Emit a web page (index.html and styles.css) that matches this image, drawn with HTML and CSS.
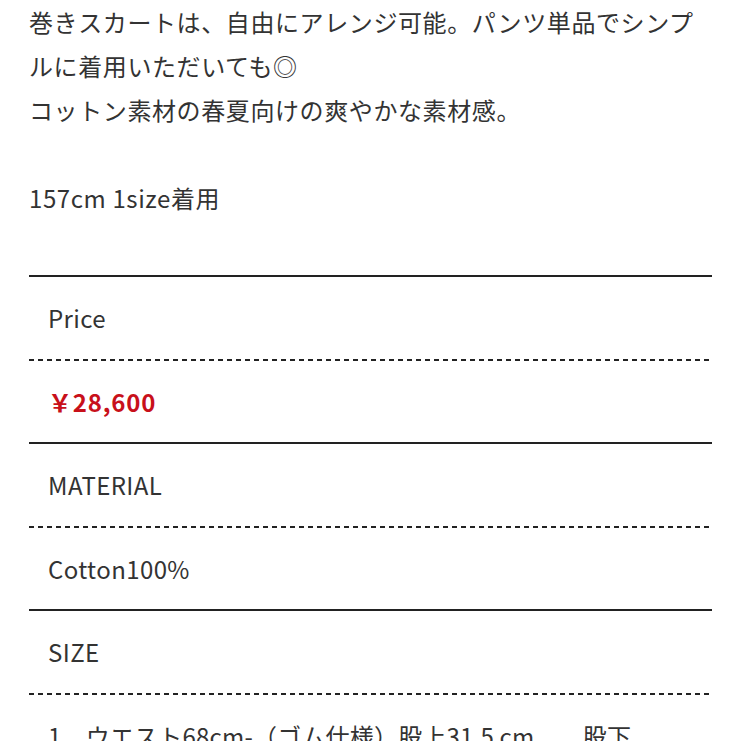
FILE: index.html
```html
<!DOCTYPE html>
<html lang="ja">
<head>
<meta charset="utf-8">
<title>巻きスカート</title>
<link rel="stylesheet" href="styles.css">
</head>
<body>
<main class="page">
  <p class="desc">巻きスカートは、自由にアレンジ可能。パンツ単品でシンプ<br>ルに着用いただいても◎<br>コットン素材の春夏向けの爽やかな素材感。</p>
  <p class="fit">157cm 1size着用</p>
  <dl class="spec">
    <dt class="label">Price</dt>
    <dd class="value price">￥28,600</dd>
    <dt class="label">MATERIAL</dt>
    <dd class="value">Cotton100%</dd>
    <dt class="label">SIZE</dt>
    <dd class="value size">1．ウエスト68cm-（ゴム仕様）股上31.5 cm　　股下</dd>
  </dl>
</main>
</body>
</html>
```

FILE: styles.css
```css
html, body {
  margin: 0;
  padding: 0;
  background: #ffffff;
}

body {
  font-family: "Noto Sans CJK JP", "Noto Sans", sans-serif;
  color: #333333;
}

.page {
  padding: 0 29px;
}

.desc,
.fit {
  margin: 0;
  font-size: 24px;
  line-height: 44px;
  letter-spacing: 0.6px;
}

.desc {
  margin-bottom: 44px;
}

.fit {
  margin-bottom: 55px;
}

.spec {
  margin: 0;
  display: flex;
  flex-direction: column;
}

.label,
.value {
  margin: 0;
  padding: 18.25px 19px;
  font-size: 24px;
  line-height: 45px;
  letter-spacing: 0.4px;
  white-space: nowrap;
  overflow: hidden;
}

.label {
  border-top: 2px solid #222222;
}

.value {
  padding-top: 20.25px;
  background-image: repeating-linear-gradient(90deg, #222222 0 5px, transparent 5px 9px);
  background-size: 100% 2px;
  background-repeat: no-repeat;
  background-position: top left;
}

.price {
  color: #c8101a;
  font-weight: 700;
  letter-spacing: 0.8px;
}

.size {
  letter-spacing: 0.2px;
}
```
